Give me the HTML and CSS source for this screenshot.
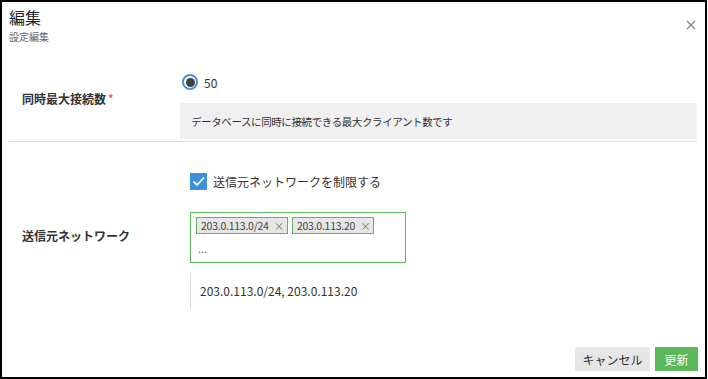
FILE: index.html
```html
<!DOCTYPE html>
<html lang="ja">
<head>
    <meta charset="UTF-8">
    <title>編集</title>
    <link rel="stylesheet" href="styles.css">
</head>
<body>
<div class="dialog">
    <div class="header">
        <div class="title">編集</div>
        <div class="subtitle">設定編集</div>
        <span class="close">
            <svg width="10" height="10" viewBox="0 0 10 10"><path d="M1 1 L9 9 M9 1 L1 9" stroke="#888" stroke-width="1.4"/></svg>
        </span>
    </div>

    <div class="row first">
        <div class="label">同時最大接続数<span class="req">*</span></div>
        <div class="field">
            <label class="radio-line">
                <span class="radio"><span class="dot"></span></span>
                <span>50</span>
            </label>
            <div class="help">データベースに同時に接続できる最大クライアント数です</div>
        </div>
    </div>

    <div class="sep"></div>

    <div class="net">
        <div></div>
        <label class="check-line">
            <span class="check">
                <svg width="17" height="17" viewBox="0 0 17 17"><path d="M3.5 8.5 L7 12 L14 4.5" fill="none" stroke="#fff" stroke-width="1.8"/></svg>
            </span>
            <span>送信元ネットワークを制限する</span>
        </label>

        <div class="label">送信元ネットワーク</div>
        <div class="tags">
            <div class="tag-list">
                <span class="tag">203.0.113.0/24<span class="x">×</span></span>
                <span class="tag">203.0.113.20<span class="x">×</span></span>
            </div>
            <div class="more">...</div>
        </div>

        <div></div>
        <div class="static">203.0.113.0/24, 203.0.113.20</div>
    </div>

    <div class="footer">
        <button class="btn cancel">キャンセル</button>
        <button class="btn ok">更新</button>
    </div>
</div>
</body>
</html>
```

FILE: styles.css
```css
* {
    font-family: "Noto Sans CJK JP", "Noto Sans", sans-serif;
    box-sizing: border-box;
}

body {
    margin: 0;
    background: #fff;
}

.dialog {
    width: 707px;
    height: 379px;
    border: 2px solid #000;
    color: #333;
    position: relative;
    display: flex;
    flex-direction: column;
}

.header {
    padding: 7px 7px 0;
    height: 68px;
}

.title {
    font-size: 16px;
    line-height: 16px;
    color: #222;
}

.subtitle {
    font-size: 10px;
    line-height: 10px;
    margin-top: 7px;
    color: #666;
}

.close {
    position: absolute;
    top: 9px;
    right: 9px;
}

.row {
    display: flex;
    padding: 0 8px 0 20px;
}

.row .label {
    width: 158px;
    align-self: center;
    padding-bottom: 12px;
}

.label {
    font-size: 12px;
    font-weight: bold;
    color: #333;
}

.req {
    color: #e04040;
    margin-left: 2px;
    font-weight: normal;
}

.field {
    flex: 1;
}

.radio-line {
    display: flex;
    align-items: center;
    height: 24px;
    padding-left: 2px;
    font-size: 12px;
}

.radio {
    width: 16px;
    height: 16px;
    border: 2px solid #4a8fdc;
    border-radius: 50%;
    display: flex;
    align-items: center;
    justify-content: center;
    margin-right: 6px;
}

.dot {
    width: 9px;
    height: 9px;
    border-radius: 50%;
    background: #404040;
}

.help {
    background: #f0f0f0;
    height: 36px;
    margin-top: 9px;
    padding: 0 11px;
    display: flex;
    align-items: center;
    font-size: 10.5px;
    letter-spacing: -0.4px;
}

.sep {
    border-top: 1px solid #ddd;
    margin: 2px 8px 0 7px;
}

.net {
    display: grid;
    grid-template-columns: 168px 216px;
    padding-left: 20px;
    margin-top: 29px;
}

.net .label {
    align-self: center;
    padding-bottom: 4px;
}

.check-line {
    display: flex;
    align-items: center;
    font-size: 12px;
    height: 21px;
    margin-bottom: 20px;
}

.check {
    width: 17px;
    height: 17px;
    background: #3a8fdf;
    margin-right: 6px;
    display: flex;
}

.tags {
    height: 51px;
    border: 1px solid #5cb85c;
    padding: 4px 5px;
}

.tag-list {
    display: flex;
    gap: 4px;
}

.tag {
    font-size: 10.5px;
    letter-spacing: -0.25px;
    line-height: 15px;
    height: 17px;
    border: 1px solid #5cb85c;
    background: #e6e6e6;
    padding: 0 3px 0 4px;
    color: #444;
    white-space: nowrap;
}

.x {
    color: #777;
    margin-left: 5px;
}

.more {
    font-size: 11px;
    line-height: 11px;
    color: #666;
    margin-top: 9px;
    padding-left: 2px;
}

.static {
    margin-top: 10px;
    height: 35px;
    border-left: 1px solid #ddd;
    padding-left: 9px;
    display: flex;
    align-items: center;
    font-size: 12px;
}

.footer {
    margin-top: auto;
    display: flex;
    justify-content: flex-end;
    gap: 5px;
    padding: 0 7px 6px;
}

.btn {
    height: 24px;
    border: none;
    font-size: 12px;
    padding: 0;
    white-space: nowrap;
    cursor: pointer;
}

.cancel {
    background: #e6e6e6;
    color: #333;
    width: 75px;
}

.ok {
    background: #5cb85c;
    color: #fff;
    width: 43px;
}
```
